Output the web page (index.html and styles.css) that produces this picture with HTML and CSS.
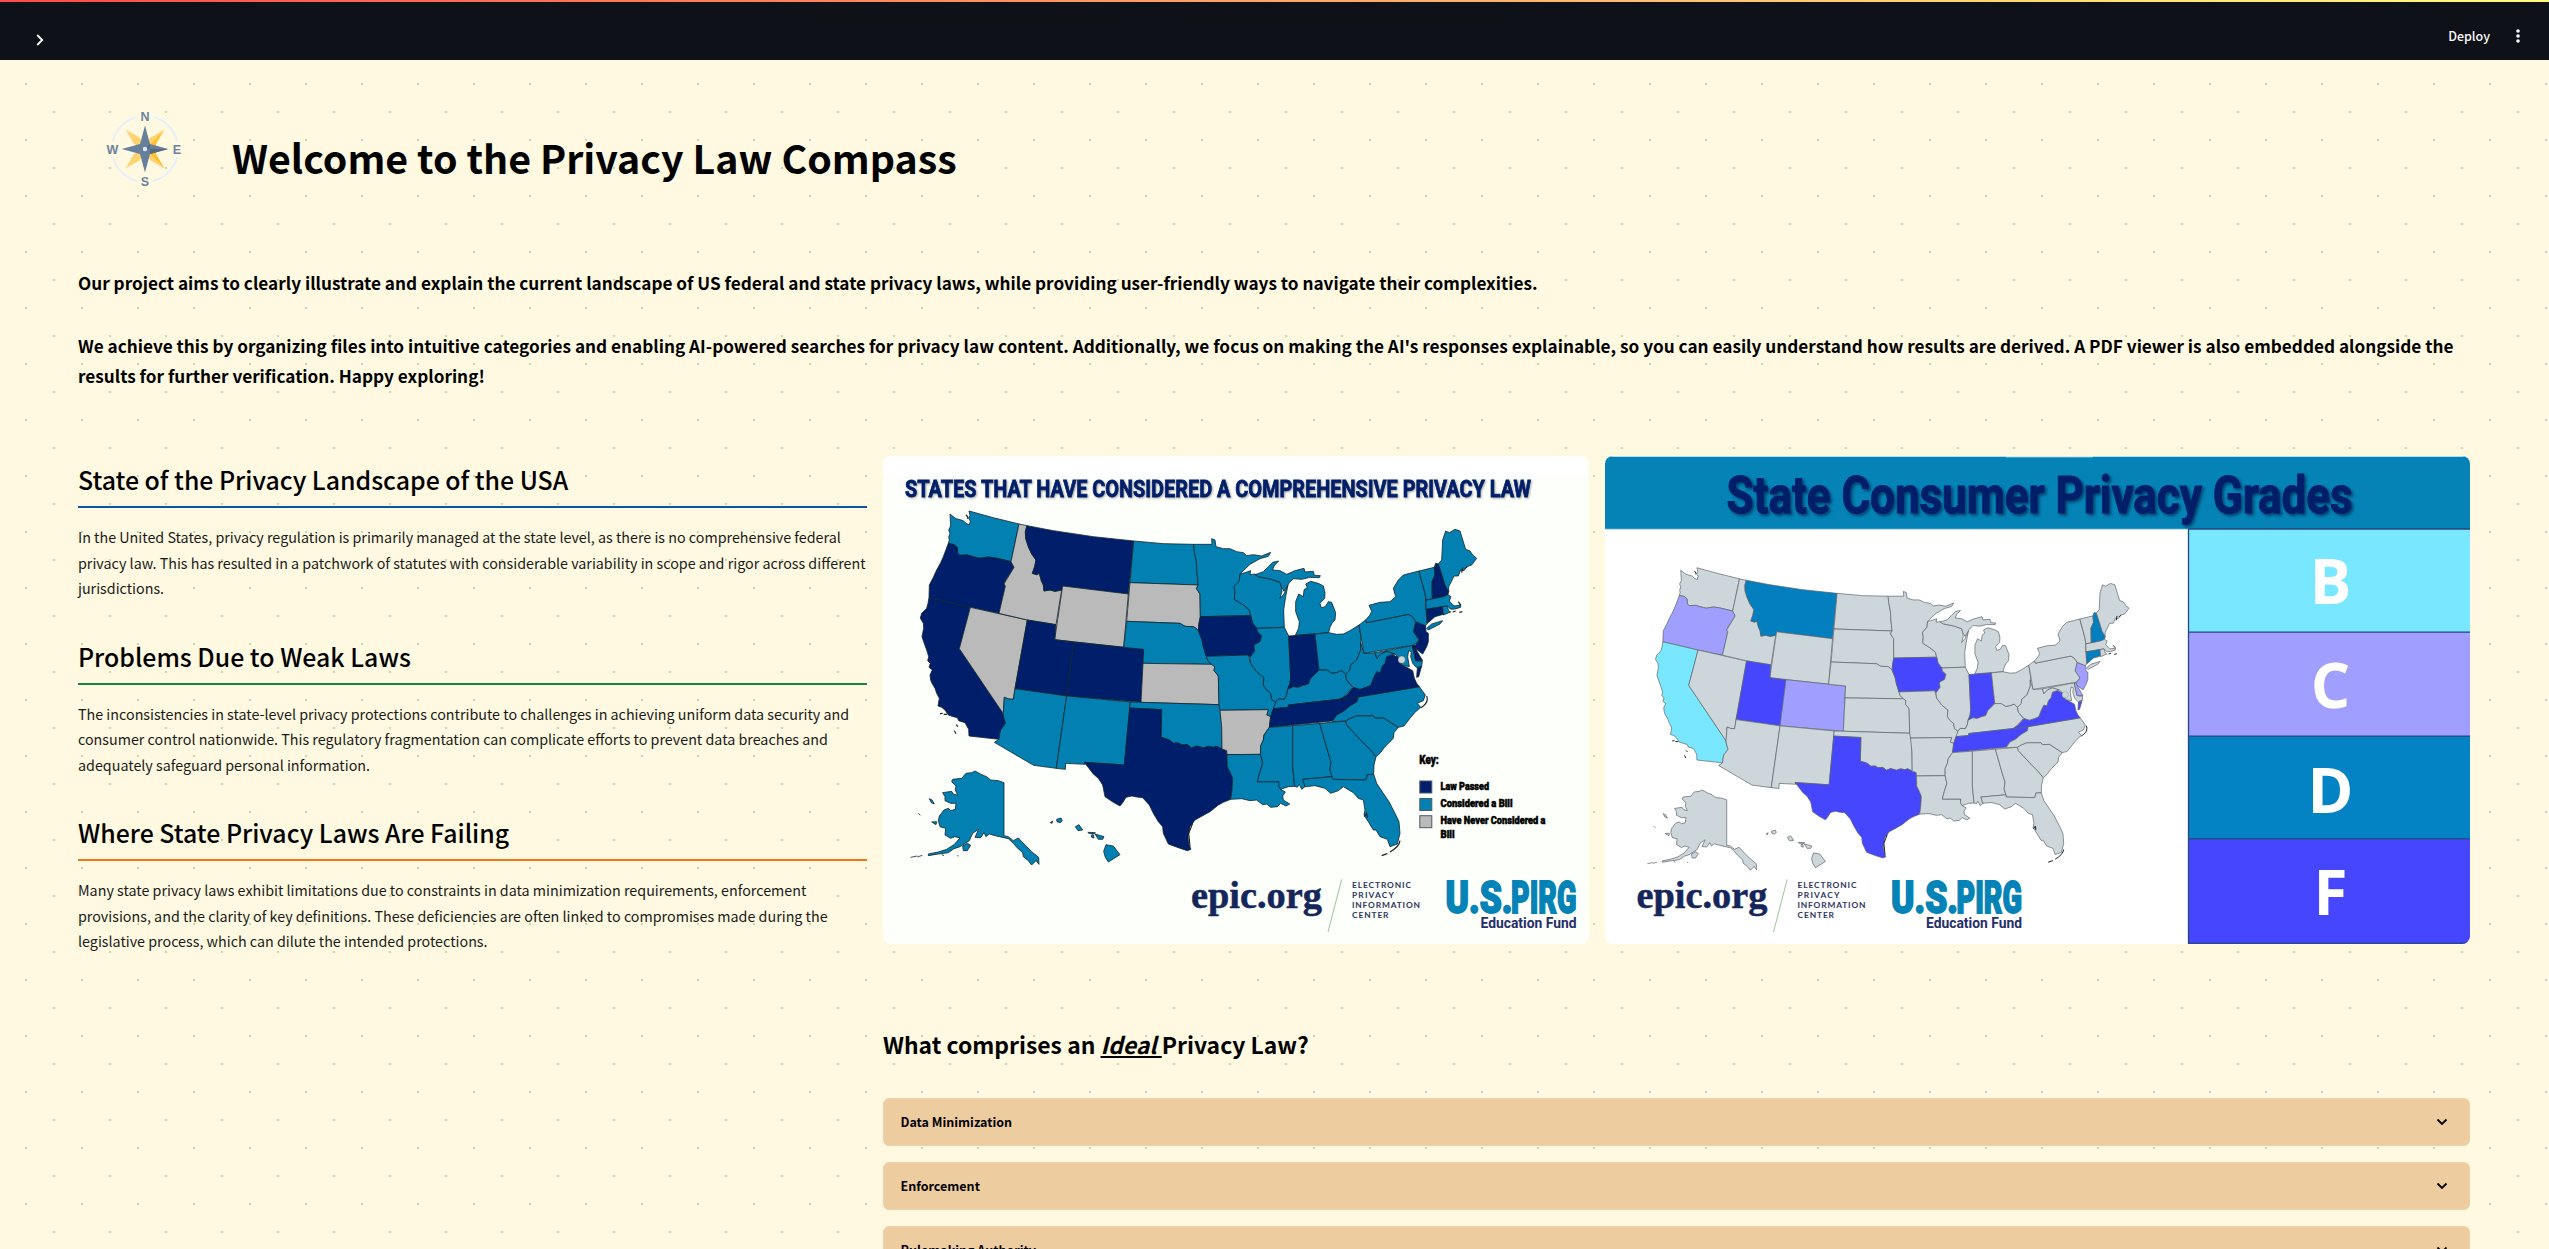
FILE: index.html
```html
<!DOCTYPE html>
<html lang="en">
<head>
<meta charset="utf-8">
<title>Privacy Law Compass</title>
<link rel="stylesheet" href="styles.css">
</head>
<body>
<svg class="defs" width="0" height="0" aria-hidden="true">
  <defs>
    <g id="usa">
      <path class="st wa" d="M210,192L220,200 228,206 240,209 250,212 258,220 268,225 271,213 266,205 270,196 267,183 340,203 417,222 393,335 360,327 342,323 325,321 300,325 290,323 262,315 240,316 233,310 232,292 222,284 205,280 208,270 206,262 210,250 206,240 212,228Z"/>
      <path class="st or" d="M205,280L222,284 232,292 233,310 240,316 262,315 290,323 300,325 325,321 342,323 360,327 393,335 402,352 390,372 378,388 372,402 376,408 357,490 271,472 147,443 148,405 160,382 170,360 182,338 190,320Z"/>
      <path class="st ca" d="M147,443L271,472 238,596 367,787 371,802 377,820 362,840 359,852 357,868 267,858 266,838 255,818 236,812 232,803 220,800 205,795 195,780 185,772 174,768 178,745 170,730 165,715 156,700 152,690 150,675 157,660 147,652 151,640 143,632 146,620 140,600 132,578 126,560 131,535 130,520 121,505 125,490 140,475 144,460Z"/>
      <path class="st nv" d="M271,472L442,510 405,716 400,748 385,747 373,742 370,787 367,787 238,596Z"/>
      <path class="st id" d="M417,222L441,227 436,245 437,265 445,290 455,312 468,330 464,350 457,370 470,374 478,370 484,392 490,405 492,423 510,420 525,424 545,420 528,524 442,510 357,490 376,408 372,402 402,352 393,335Z"/>
      <path class="st mt" d="M441,227L520,242 640,260 761,273 745,432 548,408 545,420 525,424 510,420 492,423 490,405 484,392 478,370 470,374 457,370 464,350 468,330 455,312 445,290 437,265 436,245Z"/>
      <path class="st wy" d="M548,408L745,432 731,592 524,569Z"/>
      <path class="st ut" d="M442,510L528,524 524,569 581,576 560,738 405,716Z"/>
      <path class="st co" d="M581,576L791,598 783,757 560,738Z"/>
      <path class="st az" d="M405,716L560,738 529,955 461,946 343,877 357,868 359,852 362,840 377,820 371,802 370,787 373,742 385,747 400,748Z"/>
      <path class="st nm" d="M560,738L751,756 733,945 613,937 616,943 557,940 556,958 529,955Z"/>
      <path class="st nd" d="M761,273L850,281 941,283 943,305 949,335 951,370 955,405 750,398Z"/>
      <path class="st sd" d="M750,398L955,405 949,415 960,432 961,500 957,520 955,542 948,535 940,530 915,529 900,520 740,514Z"/>
      <path class="st ne" d="M740,514L900,520 915,529 940,530 948,535 955,542 966,570 970,590 979,619 984,632 995,643 789,640 791,598 731,592Z"/>
      <path class="st ks" d="M789,640L995,643 1004,650 1002,662 1013,675 1015,680 1017,764 783,757Z"/>
      <path class="st ok" d="M751,756L783,757 1017,764 1022,781 1025,830 1026,897 1010,889 1000,892 985,889 970,894 950,888 935,894 922,884 905,885 895,879 880,880 868,870 857,866 843,862 845,779 749,774Z"/>
      <path class="st tx" d="M749,774L845,779 843,862 857,866 868,870 880,880 895,879 905,885 922,884 935,894 950,888 970,894 985,889 1000,892 1010,889 1026,897 1040,902 1042,950 1050,966 1058,985 1056,1020 1052,1048 1030,1057 1015,1065 990,1085 965,1099 945,1110 930,1130 924,1160 926,1182 933,1198 922,1202 895,1193 865,1182 857,1165 850,1150 848,1130 835,1115 820,1090 808,1065 788,1043 770,1041 755,1038 738,1042 728,1058 720,1068 700,1057 675,1040 668,1005 655,985 640,972 613,937 733,945Z"/>
      <path class="st mn" d="M941,283L996,283 995,266 1005,270 1008,290 1030,296 1050,296 1070,305 1090,308 1100,317 1120,314 1145,318 1172,307 1165,319 1140,326 1110,343 1092,360 1080,372 1078,392 1062,410 1065,425 1063,448 1090,465 1108,480 1112,497 961,500 960,432 949,415 955,405 951,370 949,335 943,305Z"/>
      <path class="st wi" d="M1080,372L1095,368 1112,362 1110,374 1125,372 1135,380 1175,388 1200,397 1204,410 1206,424 1200,445 1212,432 1224,405 1217,440 1211,480 1213,532 1130,535 1117,518 1112,497 1108,480 1090,465 1063,448 1065,425 1062,410 1078,392Z"/>
      <path class="st mi" d="M1125,374L1150,365 1165,350 1178,337 1196,333 1182,348 1178,360 1200,362 1220,373 1245,362 1272,355 1275,366 1300,364 1303,376 1321,377 1318,383 1290,382 1265,388 1240,386 1228,398 1212,424 1204,410 1200,397 1175,388 1135,380Z"/>
      <path class="st mi" d="M1246,556L1256,535 1258,515 1247,485 1247,455 1256,432 1270,440 1272,420 1282,412 1277,402 1292,394 1315,400 1330,408 1335,428 1334,445 1320,460 1324,473 1336,470 1345,455 1355,457 1367,488 1365,510 1357,518 1350,532 1346,548Z"/>
      <path class="st ia" d="M961,500L1112,497 1117,518 1130,535 1133,546 1145,557 1140,575 1122,585 1124,603 1110,622 1105,615 979,619 970,590 966,570 955,542 957,520Z"/>
      <path class="st mo" d="M979,619L1105,615 1112,640 1130,665 1152,683 1150,705 1158,718 1172,730 1175,748 1187,757 1185,770 1178,782 1172,800 1160,795 1165,779 1020,781 1017,764 1015,680 1013,675 1002,662 1004,650 995,643 984,632Z"/>
      <path class="st ar" d="M1020,781L1165,779 1160,795 1172,800 1168,832 1152,855 1150,870 1142,888 1142,913 1041,914 1040,902 1026,897 1025,830Z"/>
      <path class="st la" d="M1041,914L1142,913 1148,940 1140,965 1132,995 1197,995 1196,1007 1202,1018 1216,1026 1208,1038 1210,1050 1229,1062 1218,1068 1202,1060 1192,1070 1172,1072 1160,1062 1148,1064 1130,1050 1110,1052 1085,1046 1052,1048 1056,1020 1058,985 1050,966 1042,950Z"/>
      <path class="st il" d="M1130,535L1213,532 1226,558 1232,680 1230,700 1223,718 1220,735 1213,748 1195,747 1187,757 1175,748 1172,730 1158,718 1150,705 1152,683 1130,665 1112,640 1110,622 1124,603 1122,585 1140,575 1145,557 1133,546Z"/>
      <path class="st in" d="M1226,558L1305,552 1317,660 1305,672 1292,685 1285,702 1270,706 1255,712 1240,710 1223,718 1230,700 1232,680Z"/>
      <path class="st oh" d="M1305,552L1346,548 1370,553 1390,552 1410,542 1437,525 1443,565 1442,600 1430,630 1412,645 1410,660 1397,673 1385,662 1370,668 1355,670 1340,660 1317,660Z"/>
      <path class="st ky" d="M1223,718L1240,710 1255,712 1270,706 1285,702 1292,685 1305,672 1317,660 1340,660 1355,670 1370,668 1385,662 1397,673 1400,690 1418,713 1385,747 1225,765 1225,772 1180,776 1187,757 1195,747 1213,748 1220,735Z"/>
      <path class="st tn" d="M1180,776L1225,772 1225,765 1385,747 1435,740 1432,755 1410,768 1390,785 1370,795 1357,813 1168,832 1172,800Z"/>
      <path class="st ms" d="M1168,832L1238,827 1238,950 1244,1009 1225,1010 1202,1018 1196,1007 1197,995 1132,995 1140,965 1148,940 1142,913 1142,888 1150,870 1152,855Z"/>
      <path class="st al" d="M1238,827L1319,820 1345,910 1353,935 1350,960 1356,980 1268,988 1275,1010 1265,1018 1258,1003 1252,1012 1244,1009 1238,950Z"/>
      <path class="st ga" d="M1319,820L1397,813 1400,825 1440,868 1470,898 1488,920 1482,945 1481,973 1462,974 1458,990 1358,988 1356,980 1350,960 1353,935 1345,910Z"/>
      <path class="st fl" d="M1268,988L1356,980 1358,988 1458,990 1462,974 1481,973 1490,1000 1510,1030 1527,1055 1545,1090 1557,1115 1560,1150 1552,1182 1530,1190 1522,1168 1500,1160 1488,1140 1480,1140 1465,1115 1452,1095 1455,1080 1450,1050 1435,1045 1420,1028 1390,1010 1375,1022 1352,1030 1335,1015 1305,1007 1275,1010Z"/>
      <path class="st sc" d="M1397,813L1410,805 1430,797 1480,797 1485,804 1510,803 1555,832 1542,848 1540,865 1515,890 1500,910 1488,920 1470,898 1440,868 1400,825Z"/>
      <path class="st nc" d="M1435,740L1618,710 1636,735 1630,752 1612,760 1622,772 1604,788 1590,805 1572,828 1555,832 1510,803 1485,804 1480,797 1430,797 1410,805 1397,813 1357,815 1370,795 1390,785 1410,768 1432,755Z"/>
      <path class="st va" d="M1380,748L1400,735 1420,712 1440,718 1458,712 1472,706 1480,685 1490,665 1500,668 1507,648 1515,640 1520,620 1537,614 1555,622 1562,628 1565,645 1580,652 1598,662 1603,685 1610,700 1618,710 1435,741ZM1610,682L1612,655 1625,648 1616,680Z"/>
      <path class="st wv" d="M1442,578L1452,610 1485,608 1490,625 1505,610 1520,604 1545,612 1537,614 1520,620 1515,640 1507,648 1500,668 1490,665 1480,685 1472,706 1458,712 1440,718 1420,712 1400,690 1397,673 1410,660 1412,645 1430,630 1442,600Z"/>
      <path class="st md" d="M1485,608L1597,587 1607,632 1627,634 1625,648 1610,653 1598,640 1592,620 1594,605 1586,602 1583,620 1588,650 1565,645 1562,628 1545,612 1520,604 1505,610 1490,625Z"/>
      <path class="st de" d="M1597,587L1603,585 1612,605 1628,632 1607,632Z"/>
      <path class="st nj" d="M1607,515L1637,527 1638,545 1645,550 1645,575 1640,590 1628,612 1612,600 1603,590 1617,570 1600,545Z"/>
      <path class="st pa" d="M1437,525L1457,510 1460,518 1585,493 1597,500 1607,515 1600,545 1617,570 1603,585 1452,610Z"/>
      <path class="st ny" d="M1457,510L1470,495 1475,484 1467,466 1500,457 1530,455 1547,440 1540,415 1555,390 1570,375 1617,363 1622,385 1627,400 1635,430 1638,450 1638,478 1641,520 1637,527 1607,515 1597,500 1585,493 1460,518ZM1640,535L1655,522 1688,512 1680,522 1645,540Z"/>
      <path class="st vt" d="M1617,363L1663,352 1665,375 1656,395 1657,447 1638,450 1635,430 1627,400Z"/>
      <path class="st nh" d="M1663,352L1667,340 1675,342 1685,372 1695,405 1706,425 1704,434 1690,440 1657,447 1656,395 1665,375Z"/>
      <path class="st me" d="M1675,342L1685,330 1688,270 1697,243 1708,248 1725,238 1740,243 1757,298 1770,303 1778,315 1790,325 1775,345 1760,350 1752,362 1742,360 1735,378 1722,378 1714,395 1706,410 1706,425 1695,405 1685,372Z"/>
      <path class="st ma" d="M1638,450L1657,447 1690,440 1704,434 1713,440 1708,453 1722,468 1740,466 1735,455 1742,462 1742,472 1725,477 1712,478 1702,468 1688,470 1638,478Z"/>
      <path class="st ct" d="M1639,478L1688,470 1690,493 1665,500 1642,520Z"/>
      <path class="st ri" d="M1688,470L1702,468 1706,482 1712,486 1690,495Z"/>
      <path class="st ak" d="M372,998L372,1157 385,1160 400,1172 415,1164 430,1180 455,1205 476,1222 477,1243 468,1232 455,1245 445,1232 430,1220 428,1208 410,1192 400,1180 385,1166 345,1157 328,1152 318,1160 312,1148 302,1163 285,1162 296,1138 278,1150 268,1172 240,1190 222,1196 205,1208 175,1212 145,1217 145,1212 175,1206 200,1198 222,1184 240,1164 225,1160 212,1165 195,1155 197,1135 180,1130 175,1112 178,1098 192,1080 205,1075 212,1082 226,1078 228,1060 212,1060 195,1052 195,1040 188,1028 215,1024 220,1032 233,1036 226,1020 228,1008 215,995 218,988 245,985 258,970 275,968 285,963 305,974 320,980 332,990 355,992Z"/>
      <path class="st ak" d="M248,1188L262,1180 272,1186 262,1202 250,1202ZM148,1046L156,1050 163,1062 154,1058ZM155,1116L170,1115 168,1124ZM115,1090L121,1096M92,1222L112,1218M112,1221L127,1216M185,1214L192,1217M232,1217L236,1218"/>
      <path class="st hi" d="M511,1118L518,1113 516,1120ZM530,1108L543,1104 547,1112 540,1118 531,1115ZM586,1130L597,1124 608,1140 594,1142ZM624,1147L646,1148 644,1151 626,1150ZM634,1155L640,1154 642,1164 635,1162ZM645,1152L672,1160 668,1168 655,1168ZM678,1184L700,1188 720,1214 685,1236 676,1222 671,1204Z"/>
      <path class="shore" d="M180,791L188,790M191,793L201,793M228,824L234,830M223,842L228,851M258,194L264,202 262,206M1640,738Q1648,758 1622,774M1560,1172Q1558,1190 1530,1206M1505,1217L1522,1211M938,1120L926,1150 930,1190M1718,486L1727,483M1738,487L1747,485M1453,1100L1460,1090 1462,1104M1745,368L1748,352M1755,356L1762,350"/>
      <circle class="dc" cx="1565" cy="629" r="11"/>
    </g>
    <g id="sponsors">
      <text class="epic" x="308" y="452" textLength="131" lengthAdjust="spacingAndGlyphs">epic.org</text>
      <path class="slash" d="M458.7,423.3L445,476"/>
      <g class="expansion">
        <text x="469" y="431.7" textLength="59">ELECTRONIC</text>
        <text x="469" y="441.7" textLength="42">PRIVACY</text>
        <text x="469" y="451.7" textLength="68">INFORMATION</text>
        <text x="469" y="461.7" textLength="36.5">CENTER</text>
      </g>
      <text class="pirg" x="562.5" y="456.5" textLength="67" lengthAdjust="spacingAndGlyphs">U.S.</text>
      <text class="pirg" x="628" y="456.5" textLength="65.5" lengthAdjust="spacingAndGlyphs">PIRG</text>
      <text class="fund" x="597.5" y="472" textLength="96" lengthAdjust="spacingAndGlyphs">Education Fund</text>
    </g>
  </defs>
</svg>

<header class="topbar">
  <svg class="open-nav" width="8" height="12" viewBox="0 0 8 12"><path d="M1.2,1L6.2,6 1.2,11"/></svg>
  <div class="actions">
    <span>Deploy</span>
    <svg width="4" height="14" viewBox="0 0 4 14"><circle cx="2" cy="2" r="1.8"/><circle cx="2" cy="7" r="1.8"/><circle cx="2" cy="12" r="1.8"/></svg>
  </div>
</header>

<main class="page">
  <div class="title-row">
    <svg class="compass" width="80" height="80" viewBox="-40 -40 80 80">
      <circle class="ring" r="33"/>
      <g class="ray-light"><path d="M0,0L-19.5,-19.5 -5,-11Z"/><path d="M0,0L-19.5,-19.5 -11,-5Z"/><path d="M0,0L-19.5,19.5 -5,11Z"/><path d="M0,0L-19.5,19.5 -11,5Z"/></g>
      <path class="ray-light" d="M0,0L5,-11 19.5,-19.5ZM0,0L5,11 19.5,19.5Z"/>
      <path class="ray-deep" d="M0,0L11,-5 19.5,-19.5ZM0,0L11,5 19.5,19.5ZM0,0L11,-5V5Z"/>
      <path class="star" d="M0,-23.5L5,-5 23.3,0 5,5 0,23.5 -5,5 -23.3,0 -5,-5Z"/>
      <path class="star-dark" d="M0,-23.5L5,-5 0,0ZM23.3,0L5,5 0,0ZM0,23.5L0,0 5,5ZM0,-23.5V23.5L5,5 5,0 5,-5Z"/>
      <circle class="hub" r="2.2"/>
      <text x="0" y="-28">N</text><text x="32" y="4.8">E</text><text x="0" y="37">S</text><text x="-32.5" y="4.8">W</text>
    </svg>
    <h1>Welcome to the Privacy Law Compass</h1>
  </div>

  <div class="intro">
    <p>Our project aims to clearly illustrate and explain the current landscape of US federal and state privacy laws, while providing user-friendly ways to navigate their complexities.</p>
    <p>We achieve this by organizing files into intuitive categories and enabling AI-powered searches for privacy law content. Additionally, we focus on making the AI's responses explainable, so you can easily understand how results are derived. A PDF viewer is also embedded alongside the<br>results for further verification. Happy exploring!</p>
  </div>

  <div class="columns">
    <div class="topics">
      <section class="topic blue">
        <h2>State of the Privacy Landscape of the USA</h2>
        <p>In the United States, privacy regulation is primarily managed at the state level, as there is no comprehensive federal<br>privacy law. This has resulted in a patchwork of statutes with considerable variability in scope and rigor across different<br>jurisdictions.</p>
      </section>
      <section class="topic green">
        <h2>Problems Due to Weak Laws</h2>
        <p>The inconsistencies in state-level privacy protections contribute to challenges in achieving uniform data security and<br>consumer control nationwide. This regulatory fragmentation can complicate efforts to prevent data breaches and<br>adequately safeguard personal information.</p>
      </section>
      <section class="topic orange">
        <h2>Where State Privacy Laws Are Failing</h2>
        <p>Many state privacy laws exhibit limitations due to constraints in data minimization requirements, enforcement<br>provisions, and the clarity of key definitions. These deficiencies are often linked to compromises made during the<br>legislative process, which can dilute the intended protections.</p>
      </section>
    </div>

    <div class="content">
      <div class="maps">
        <svg class="map considered" width="706" height="488" viewBox="0 0 706 488">
          <rect class="sheet" width="706" height="488"/>
          <rect class="strip" width="706" height="20.5"/>
          <text class="map-title" x="22" y="41.3" textLength="626" lengthAdjust="spacingAndGlyphs">STATES THAT HAVE CONSIDERED A COMPREHENSIVE PRIVACY LAW</text>
          <use href="#usa" transform="translate(-3,-6) scale(.33333)"/>
          <g class="key">
            <text class="key-head" x="536.3" y="308" textLength="19.5" lengthAdjust="spacingAndGlyphs">Key:</text>
            <rect class="passed" x="536.8" y="325" width="12" height="12"/>
            <rect class="bill" x="536.8" y="342.5" width="12" height="12"/>
            <rect class="never" x="536.8" y="359.7" width="12" height="12"/>
            <text x="557.5" y="334" textLength="48.5" lengthAdjust="spacingAndGlyphs">Law Passed</text>
            <text x="557.5" y="351" textLength="72" lengthAdjust="spacingAndGlyphs">Considered a Bill</text>
            <text x="557.5" y="368.3" textLength="105" lengthAdjust="spacingAndGlyphs">Have Never Considered a</text>
            <text x="557.5" y="382" textLength="14" lengthAdjust="spacingAndGlyphs">Bill</text>
          </g>
          <use href="#sponsors"/>
        </svg>

        <svg class="map grades" width="865" height="488" viewBox="0 0 865 488">
          <rect class="sheet" width="865" height="488"/>
          <rect class="banner" width="865" height="73"/>
          <path class="banner-edge" d="M0,.5H865M0,73.3H583"/>
          <path class="banner-glint" d="M401,.8H488"/>
          <text class="map-title" x="121.5" y="56.7" textLength="626" lengthAdjust="spacingAndGlyphs">State Consumer Privacy Grades</text>
          <use href="#usa" transform="translate(16.2,59.6) scale(.28367,.28487)"/>
          <rect class="g-b" x="583.5" y="73" width="282" height="103"/>
          <rect class="g-c" x="583.5" y="176" width="282" height="104"/>
          <rect class="g-d" x="583.5" y="280" width="282" height="103"/>
          <rect class="g-f" x="583.5" y="383" width="282" height="105"/>
          <path class="g-lines" d="M583.5,73V488M583.5,73H865M583.5,176.2H865M583.5,280.2H865M583.5,382.8H865M583.5,487.2H865"/>
          <g class="letters"><text x="725.5" y="148.4">B</text><text x="725.5" y="252">C</text><text x="725.5" y="356.8">D</text><text x="725.5" y="459.2">F</text></g>
          <use href="#sponsors" x="-276.5"/>
        </svg>
      </div>

      <h2 class="ideal">What comprises an <em>Ideal </em>Privacy Law?</h2>

      <div class="accordion">
        <div class="item"><span>Data Minimization</span><svg width="12" height="8" viewBox="0 0 12 8"><path d="M1.5,1.5L6,6 10.5,1.5"/></svg></div>
        <div class="item"><span>Enforcement</span><svg width="12" height="8" viewBox="0 0 12 8"><path d="M1.5,1.5L6,6 10.5,1.5"/></svg></div>
        <div class="item"><span>Rulemaking Authority</span><svg width="12" height="8" viewBox="0 0 12 8"><path d="M1.5,1.5L6,6 10.5,1.5"/></svg></div>
      </div>
    </div>
  </div>
</main>
</body>
</html>
```

FILE: styles.css
```css
* { box-sizing: border-box; }

html, body { height: 100%; }

body {
  margin: 0;
  overflow: hidden;
  color: #000;
  font-family: "Noto Sans CJK JP", "Noto Sans CJK SC", "Open Sans", sans-serif;
  background-color: #fef9e0;
  background-image: url("data:image/svg+xml,%3Csvg xmlns='http://www.w3.org/2000/svg' width='56' height='56'%3E%3Cpath fill='%23ccd5ae' d='M25 27h2v2h-2zM53 0h2v1h-2zM53 55h2v1h-2z'/%3E%3C/svg%3E");
}

h1, h2, p { margin: 0; }

.defs { display: block; }

.topbar {
  height: 60px;
  display: flex;
  justify-content: space-between;
  align-items: center;
  padding: 18px 29px 0 36px;
  color: #fafafa;
  background: linear-gradient(90deg, #ff4b4b, #fffd80) top / 100% 2px no-repeat #0e1117;
}
.open-nav { margin-top: 2px; }
.open-nav path { fill: none; stroke: #fafafa; stroke-width: 1.8; }
.actions { display: flex; align-items: center; gap: 26px; font-size: 12.5px; font-weight: 500; line-height: 20px; margin-top: -6px; }
.actions svg { fill: #fafafa; }

.page { padding: 0 79px 0 78px; }

.title-row { display: flex; align-items: flex-start; padding: 49px 0 0 27px; height: 192px; }
.compass { flex: none; font: bold 12.5px "Liberation Sans", sans-serif; text-anchor: middle; }
.compass text { fill: #6b83a0; }
.ring { fill: none; stroke: #e6f0fb; stroke-width: 2; stroke-dasharray: 35.8 16; stroke-dashoffset: -8; }
.ray-light { fill: #ffd16c; }
.ray-deep { fill: #ffc02e; }
.star { fill: #667f9b; }
.star-dark { fill: #596a82; }
.hub { fill: #dcebfb; }
h1 { margin-left: 47px; padding-top: 21px; font-size: 39.33px; line-height: 53px; font-weight: 700; white-space: nowrap; }

.intro { font-size: 17.2px; line-height: 30px; font-weight: 700; white-space: nowrap; padding-top: 15.5px; }
.intro p + p { margin-top: 33px; }

.columns { display: flex; gap: 16px; margin-top: 65.5px; }
.topics { width: 789px; flex: none; padding-top: 5px; }
.topic { height: 176.6px; white-space: nowrap; }
.topic h2 { font-size: 24.87px; line-height: 34px; font-weight: 500; height: 47px; padding-top: 1px; border-bottom: 2px solid var(--rule); }
.topic p { margin-top: 16px; font-size: 14.31px; line-height: 25.6px; color: #1a1a1a; }
.blue { --rule: #0d55a3; }
.green { --rule: #15883b; }
.orange { --rule: #ee7518; }

.content { flex: 1; }
.maps { display: flex; justify-content: space-between; }
.map { display: block; flex: none; border-radius: 8px; }
.map-title { font-family: Roboto, "Liberation Sans", sans-serif; font-weight: 700; fill: #001e69; }
.wa { fill: var(--wa, var(--land)); } .or { fill: var(--or, var(--land)); }
.ca { fill: var(--ca, var(--land)); } .nv { fill: var(--nv, var(--land)); }
.id { fill: var(--id, var(--land)); } .mt { fill: var(--mt, var(--land)); }
.wy { fill: var(--wy, var(--land)); } .ut { fill: var(--ut, var(--land)); }
.co { fill: var(--co, var(--land)); } .sd { fill: var(--sd, var(--land)); }
.ks { fill: var(--ks, var(--land)); } .tx { fill: var(--tx, var(--land)); }
.ia { fill: var(--ia, var(--land)); } .ar { fill: var(--ar, var(--land)); }
.in { fill: var(--in, var(--land)); } .tn { fill: var(--tn, var(--land)); }
.va { fill: var(--va, var(--land)); } .de { fill: var(--de, var(--land)); }
.nj { fill: var(--nj, var(--land)); } .ct { fill: var(--ct, var(--land)); }
.nh { fill: var(--nh, var(--land)); }
.az, .nm, .nd, .ne, .ok, .mn, .wi, .mi, .mo, .la, .il, .oh, .ky, .ms, .al, .ga,
.fl, .sc, .nc, .wv, .md, .pa, .ny, .vt, .me, .ma, .ri, .ak, .hi { fill: var(--land); }
.st, .dc { stroke: var(--border); stroke-width: var(--border-width); stroke-linejoin: round; }
.shore { fill: none; stroke: #1b2226; stroke-width: 3.5; }
.dc { fill: #cdd6da; stroke-width: 1; }

.considered {
  --passed: #001e69; --never: #bababa; --land: #0380b2;
  --border: #12242f; --border-width: 2.4;
  --or: var(--passed); --ca: var(--passed); --mt: var(--passed); --ut: var(--passed);
  --co: var(--passed); --tx: var(--passed); --ia: var(--passed); --in: var(--passed);
  --tn: var(--passed); --va: var(--passed); --de: var(--passed); --nj: var(--passed);
  --ct: var(--passed); --nh: var(--passed);
  --id: var(--never); --nv: var(--never); --wy: var(--never); --sd: var(--never);
  --ks: var(--never); --ar: var(--never);
}
.considered .sheet { fill: #fcfffa; }
.strip { fill: #fff; }
.considered .map-title { font-size: 24px; stroke: #001e69; stroke-width: .8; filter: drop-shadow(1px 1px 1px rgba(0, 0, 0, .35)); }
.key text { font: 900 10.6px Roboto, "Liberation Sans", sans-serif; fill: #000; stroke: #000; stroke-width: .5; }
.key .key-head { font-size: 12.5px; }
.key rect { stroke: #4d5a66; stroke-width: 1; }
.passed { fill: #001e69; }
.bill { fill: #0380b2; }
.never { fill: #bababa; }

.grades {
  --b: #78e7ff; --c: #a09fff; --d: #0383c4; --f: #4646ff; --land: #cdd6da;
  --border: #5c6266; --border-width: 2.4;
  --ca: var(--b); --or: var(--c); --co: var(--c); --nj: var(--c); --de: var(--c);
  --mt: #037fc0; --nh: #037fc0; --ct: #037fc0;
  --ut: var(--f); --tx: var(--f); --ia: var(--f); --in: var(--f); --tn: var(--f); --va: var(--f);
}
.grades .sheet { fill: #fff; }
.banner { fill: #0583b6; }
.banner-edge { stroke: #b5dcea; stroke-width: 1; }
.banner-glint { stroke: #e4f2f5; stroke-width: 1; }
.grades .map-title { font-size: 52px; stroke: #001e69; stroke-width: 1; filter: drop-shadow(2px 2px 1.5px rgba(0, 20, 60, .6)); }
.g-b { fill: var(--b); } .g-c { fill: var(--c); } .g-d { fill: var(--d); } .g-f { fill: var(--f); }
.g-lines { stroke: #27467c; stroke-width: 1.3; fill: none; }
.letters text { font: 700 62px "Open Sans", sans-serif; fill: #fff; text-anchor: middle; }

.epic { font: 700 38px "Liberation Serif", serif; fill: #15265a; stroke: #15265a; stroke-width: .5; }
.slash { stroke: #9fc49b; stroke-width: 1; }
.expansion text { font: 700 8.4px Lato, sans-serif; fill: #2d355f; }
.pirg { font: 900 44px Roboto, "Liberation Sans", sans-serif; fill: #0583b6; stroke: #0583b6; stroke-width: 1.8; }
.fund { font: 700 15.5px Roboto, "Liberation Sans", sans-serif; fill: #262e6b; }

.ideal { margin-top: 80px; font-size: 22.9px; line-height: 40px; font-weight: 700; white-space: pre; }
.ideal em { text-decoration: underline; text-decoration-thickness: 2px; text-underline-offset: 2px; }

.accordion { margin-top: 34px; display: flex; flex-direction: column; gap: 16px; }
.item {
  height: 48px;
  flex: none;
  display: flex;
  align-items: center;
  justify-content: space-between;
  padding: 0 21px 0 16.5px;
  border: 1px solid #efd2a8;
  border-radius: 6px;
  background: #edcd9f;
  font-size: 12.5px;
  line-height: 20px;
  font-weight: 700;
}
.item svg path { fill: none; stroke: #000; stroke-width: 1.8; }
```
